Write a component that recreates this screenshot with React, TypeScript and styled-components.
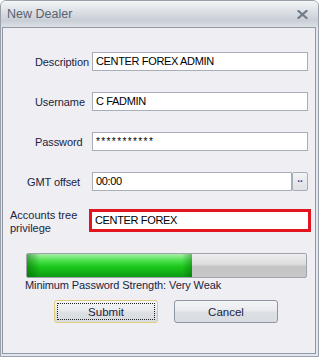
import React from 'react';
import styled, { createGlobalStyle } from 'styled-components';

const GlobalStyle = createGlobalStyle`
  html, body {
    margin: 0;
    padding: 0;
    background: #ffffff;
  }
  body {
    font-family: Tahoma, "Liberation Sans", Arial, sans-serif;
  }
`

const Window = styled.div`
  width: 319px;
  height: 357px;
  box-sizing: border-box;
  display: flex;
  flex-direction: column;
  border: 1px solid #9aa1ab;
  border-radius: 6px 6px 0 0;
  background: #e2e6ec;
  overflow: hidden;
`

const TitleBar = styled.div`
  height: 26px;
  flex: 0 0 26px;
  display: flex;
  align-items: center;
  justify-content: space-between;
  padding: 0 10px 0 6px;
  background: linear-gradient(#f4f6f8 0%, #dfe3e8 35%, #c9cfd6 75%, #dde1e6 100%);
  color: #5a6270;
  font-size: 12.5px;
  font-family: "Liberation Sans", Arial, sans-serif;
`

const Client = styled.div`
  flex: 1;
  margin: 0 2px 2px 1px;
  border: 1px solid #8f98a4;
  background: #eeeef3;
  display: flex;
  flex-direction: column;
  font-family: "Liberation Sans", Arial, sans-serif;
  font-size: 11px;
  color: #1b2440;
`

const Row = styled.div<{ $top: number }>`
  display: flex;
  align-items: center;
  margin-top: ${p => p.$top}px;
  height: 19px;
`

const Label = styled.div<{ $left: number }>`
  width: 89px;
  box-sizing: border-box;
  padding-left: ${p => p.$left}px;
  white-space: nowrap;
  font-size: 11px;
  letter-spacing: -0.1px;
`

const Input = styled.div<{ $width: number }>`
  width: ${p => p.$width}px;
  height: 19px;
  box-sizing: border-box;
  border: 1px solid #a7aeb8;
  background: #ffffff;
  color: #000000;
  padding: 0 3px;
  line-height: 17px;
  font-size: 11px;
  letter-spacing: -0.35px;
  white-space: nowrap;
`

const Stars = styled.span`
  font-size: 10px;
  letter-spacing: 1.4px;
  vertical-align: 1px;
`

const DotsButton = styled.div`
  width: 16px;
  height: 19px;
  box-sizing: border-box;
  border: 1px solid #a7aeb8;
  border-radius: 2px;
  background: linear-gradient(#f3f4f6, #dde0e4);
  color: #3a2f8a;
  font-size: 10px;
  text-align: center;
  line-height: 12px;
  font-weight: bold;
`

const TreeRow = styled.div`
  display: flex;
  align-items: center;
  margin-top: 17px;
  height: 24px;
`

const TreeLabel = styled.div`
  width: 86px;
  padding-left: 7px;
  box-sizing: border-box;
  line-height: 13px;
  font-size: 11px;
  margin-top: 3px;
`

const Highlight = styled.div`
  width: 222px;
  height: 23px;
  box-sizing: border-box;
  border: 3px solid #e0151f;
  background: #ffffff;
  color: #000000;
  padding: 0 3px;
  line-height: 17px;
  font-size: 11px;
  letter-spacing: -0.35px;
`

const Strength = styled.div`
  margin: 21px 0 0 23px;
  width: 281px;
  height: 25px;
  box-sizing: border-box;
  border: 1px solid #9ea4ac;
  border-radius: 2px;
  background: linear-gradient(#eeeeee 0%, #dcdcdc 45%, #c4c4c4 55%, #c8c8c8 100%);
  overflow: hidden;
`

const StrengthFill = styled.div`
  height: 100%;
  background:
    linear-gradient(90deg, rgba(0, 80, 0, 0.45) 0%, rgba(0, 80, 0, 0) 8%, rgba(0, 80, 0, 0) 94%, rgba(0, 80, 0, 0.35) 100%),
    linear-gradient(#a6f0a6 0%, #49e049 30%, #1cc81c 55%, #0d9a12 100%);
`

const Caption = styled.div`
  margin: 1px 0 0 22px;
  font-size: 11px;
  letter-spacing: -0.1px;
`

const Buttons = styled.div`
  display: flex;
  gap: 16px;
  margin: 9px 0 0 51px;
`

const Button = styled.div<{ $focused?: boolean }>`
  width: 104px;
  height: 23px;
  box-sizing: border-box;
  border: 1px solid ${p => (p.$focused ? '#e2cd7a' : '#8d96a2')};
  border-radius: 3px;
  background: linear-gradient(#f4f5f7 0%, #e9ebee 45%, #dcdfe3 55%, #d9dce1 100%);
  display: flex;
  align-items: center;
  justify-content: center;
  padding: 2px;
  font-size: 11.5px;
  color: #1b2440;
`

const FocusRect = styled.div<{ $focused?: boolean }>`
  width: 100%;
  height: 100%;
  box-sizing: border-box;
  border: 1px dotted ${p => (p.$focused ? '#222' : 'transparent')};
  display: flex;
  align-items: center;
  justify-content: center;
`

const CloseIcon = () => (
  <svg width="11" height="9" viewBox="0 0 11 9">
    <path d="M1.5 1 L9.5 8 M9.5 1 L1.5 8" stroke="#737d89" strokeWidth="2.2" strokeLinecap="square" />
  </svg>
)

const fields = [
  { label: 'Description', left: 32, value: 'CENTER FOREX ADMIN', top: 24 },
  { label: 'Username', left: 32, value: 'C FADMIN', top: 21 },
]

const App = () => {
  const strength = 59

  return (
    <>
      <GlobalStyle />
      <Window>
        <TitleBar>
          <span>New Dealer</span>
          <CloseIcon />
        </TitleBar>
        <Client>
          {fields.map(f => (
            <Row key={f.label} $top={f.top}>
              <Label $left={f.left}>{f.label}</Label>
              <Input $width={216}>{f.value}</Input>
            </Row>
          ))}
          <Row $top={21}>
            <Label $left={32}>Password</Label>
            <Input $width={216}><Stars>***********</Stars></Input>
          </Row>
          <Row $top={21}>
            <Label $left={24}>GMT offset</Label>
            <Input $width={200}>00:00</Input>
            <DotsButton>..</DotsButton>
          </Row>
          <TreeRow>
            <TreeLabel>Accounts tree<br />privilege</TreeLabel>
            <Highlight>CENTER FOREX</Highlight>
          </TreeRow>
          <Strength>
            <StrengthFill style={{ width: `${strength}%` }} />
          </Strength>
          <Caption>Minimum Password Strength: Very Weak</Caption>
          <Buttons>
            <Button $focused>
              <FocusRect $focused>Submit</FocusRect>
            </Button>
            <Button>
              <FocusRect>Cancel</FocusRect>
            </Button>
          </Buttons>
        </Client>
      </Window>
    </>
  )
}

export default App
